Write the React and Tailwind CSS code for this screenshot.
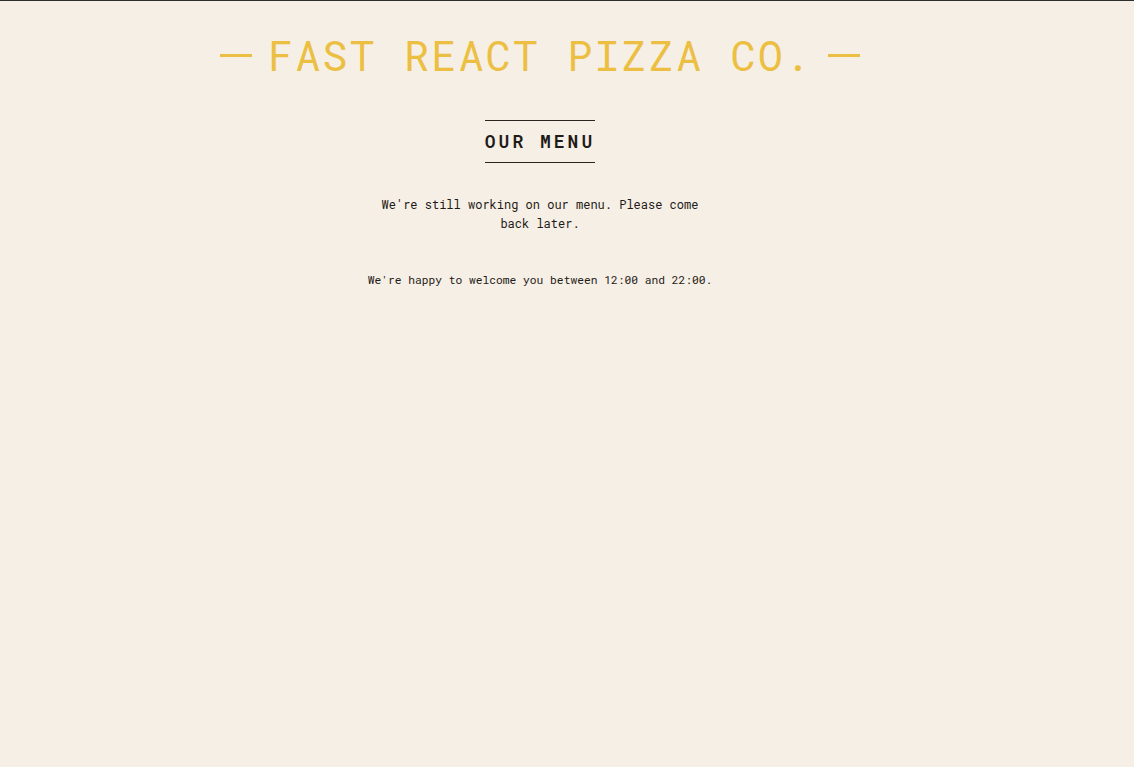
export default function App() {
  const mono = { fontFamily: '"Roboto Mono", "Liberation Mono", "DejaVu Sans Mono", monospace' };
  return (
    <div className="min-h-[767px] w-full bg-[#f6efe5] border-t border-[#2e2e2e]" style={mono}>
      <div className="w-[1080px] flex flex-col items-center">
        <header className="mt-[32px] flex items-center gap-4">
          <span className="block w-8 h-[3px] bg-[#ecbf42]" />
          <h1 className="text-[42px] leading-[44px] tracking-[2px] text-[#ecbf42] font-normal">
            FAST REACT PIZZA CO.
          </h1>
          <span className="block w-8 h-[3px] bg-[#ecbf42]" />
        </header>
        <h2 className="mt-[43px] border-y border-[#2a2622] pt-[9px] pb-[10px] text-[18px] leading-[22px] font-semibold tracking-[3px] text-[#1f1b18]">
          OUR MENU
        </h2>
        <p className="mt-[32px] w-[330px] text-center text-[12px] leading-[19px] text-[#1f1b18]">
          We're still working on our menu. Please come back later.
        </p>
        <p className="mt-[38px] text-center text-[11.25px] leading-[18px] text-[#1f1b18]">
          We're happy to welcome you between 12:00 and 22:00.
        </p>
      </div>
    </div>
  );
}
